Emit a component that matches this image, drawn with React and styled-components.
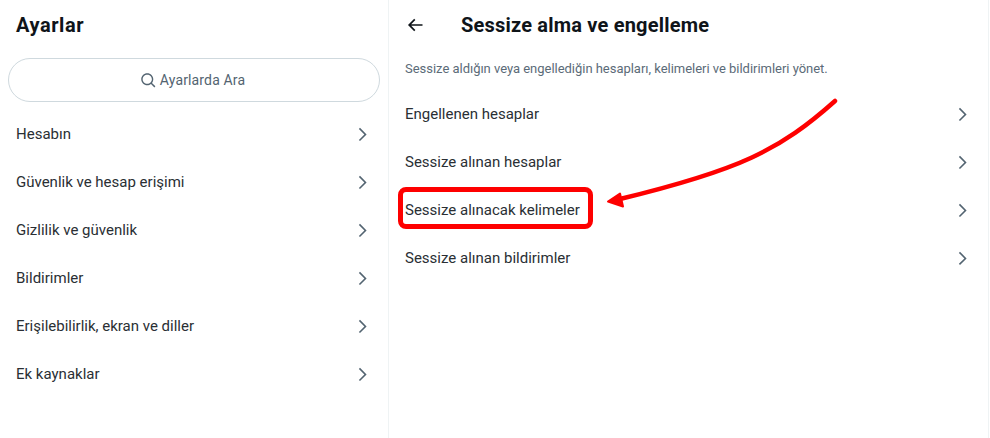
import React from 'react';
import styled, { createGlobalStyle } from 'styled-components';

const GlobalStyle = createGlobalStyle`
  html, body {
    margin: 0;
    padding: 0;
    background: #fff;
  }
  body {
    font-family: Roboto, "Liberation Sans", Arial, sans-serif;
    color: #0f1419;
  }
`;

const Page = styled.div`
  position: relative;
  display: flex;
  width: 990px;
  height: 438px;
  overflow: hidden;
  background: #fff;
`;

const Column = styled.section`
  box-sizing: border-box;
  width: ${(props) => props.$width}px;
  height: 100%;
  border-right: 1px solid #eff3f4;
`;

const Header = styled.header`
  display: flex;
  align-items: center;
  height: 53px;
  padding: 0 0 3px 16px;
  box-sizing: border-box;
`;

const Title = styled.h2`
  margin: 0;
  font-size: 20px;
  line-height: 24px;
  font-weight: 700;
  letter-spacing: ${(props) => props.$spacing}px;
  color: #0f1419;
`;

const BackButton = styled.div`
  display: flex;
  width: 56px;
  color: #0f1419;
`;

const SearchBox = styled.div`
  box-sizing: border-box;
  display: flex;
  align-items: center;
  justify-content: center;
  gap: 3px;
  height: 44px;
  margin: 5px 8px 8px;
  padding-right: 3px;
  border: 1px solid #cfd9de;
  border-radius: 22px;
  color: #536471;
  font-size: 14px;
  letter-spacing: 0.01em;
`;

const Description = styled.p`
  box-sizing: border-box;
  height: 37px;
  margin: 0;
  padding: 8px 16px 0;
  font-size: 13px;
  line-height: 16px;
  letter-spacing: -0.025px;
  color: #5b6b78;
`;

const Row = styled.div`
  display: flex;
  align-items: center;
  justify-content: space-between;
  height: 48px;
  padding: 0 16px;
  font-size: 15px;
  line-height: 20px;
  color: #2a2f34;
`;

const RowLabel = styled.span`
  position: relative;
`;

const Highlight = styled.span`
  position: absolute;
  left: -7px;
  top: -13px;
  width: 195px;
  height: 42px;
  box-sizing: border-box;
  border: 5px solid #fe0000;
  border-radius: 8px;
`;

const Chevron = styled.svg`
  width: 18.75px;
  height: 18.75px;
  fill: #536471;
  flex: none;
`;

const SearchIcon = styled.svg`
  width: 17px;
  height: 17px;
  fill: #536471;
`;

const BackIcon = styled.svg`
  width: 20px;
  height: 20px;
  fill: currentColor;
`;

const Annotation = styled.svg`
  position: absolute;
  left: 0;
  top: 0;
  width: 990px;
  height: 438px;
  pointer-events: none;
`;

const settings = [
  'Hesabın',
  'Güvenlik ve hesap erişimi',
  'Gizlilik ve güvenlik',
  'Bildirimler',
  'Erişilebilirlik, ekran ve diller',
  'Ek kaynaklar',
];

const muted = [
  { label: 'Engellenen hesaplar' },
  { label: 'Sessize alınan hesaplar' },
  { label: 'Sessize alınacak kelimeler', marked: true },
  { label: 'Sessize alınan bildirimler' },
];

const ChevronRight = () => (
  <Chevron viewBox="0 0 24 24">
    <path d="M14.586 12L7.543 4.96l1.414-1.42L17.414 12l-8.457 8.46-1.414-1.42L14.586 12z" />
  </Chevron>
);

export default function App() {
  return (
    <Page>
      <GlobalStyle />
      <Column $width={389}>
        <Header>
          <Title $spacing={0.55}>Ayarlar</Title>
        </Header>
        <SearchBox>
          <SearchIcon viewBox="0 0 24 24">
            <path d="M10.25 3.75c-3.59 0-6.5 2.91-6.5 6.5s2.91 6.5 6.5 6.5c1.795 0 3.419-.726 4.596-1.904 1.178-1.177 1.904-2.801 1.904-4.596 0-3.59-2.91-6.5-6.5-6.5zm-8.5 6.5c0-4.694 3.806-8.5 8.5-8.5s8.5 3.806 8.5 8.5c0 1.986-.682 3.815-1.824 5.262l4.781 4.781-1.414 1.414-4.781-4.781c-1.447 1.142-3.276 1.824-5.262 1.824-4.694 0-8.5-3.806-8.5-8.5z" />
          </SearchIcon>
          Ayarlarda Ara
        </SearchBox>
        {settings.map((item) => (
          <Row key={item}>
            <RowLabel>{item}</RowLabel>
            <ChevronRight />
          </Row>
        ))}
      </Column>
      <Column $width={600}>
        <Header>
          <BackButton>
            <BackIcon viewBox="0 0 24 24">
              <path d="M7.414 13l5.043 5.04-1.414 1.42L3.586 12l7.457-7.46 1.414 1.42L7.414 11H21v2H7.414z" />
            </BackIcon>
          </BackButton>
          <Title $spacing={0.2}>Sessize alma ve engelleme</Title>
        </Header>
        <Description>
          Sessize aldığın veya engellediğin hesapları, kelimeleri ve bildirimleri yönet.
        </Description>
        {muted.map((item) => (
          <Row key={item.label}>
            <RowLabel>
              {item.label}
              {item.marked && <Highlight />}
            </RowLabel>
            <ChevronRight />
          </Row>
        ))}
      </Column>
      <Annotation viewBox="0 0 990 438">
        <path
          d="M835 101 C 780 150, 740 170, 620 199"
          fill="none"
          stroke="#fe0000"
          strokeWidth="4.5"
          strokeLinecap="round"
        />
        <path
          d="M608 201.5 L620 193.5 L623 206.5 Z"
          fill="#fe0000"
          stroke="#fe0000"
          strokeWidth="2"
          strokeLinejoin="round"
        />
      </Annotation>
    </Page>
  );
}
